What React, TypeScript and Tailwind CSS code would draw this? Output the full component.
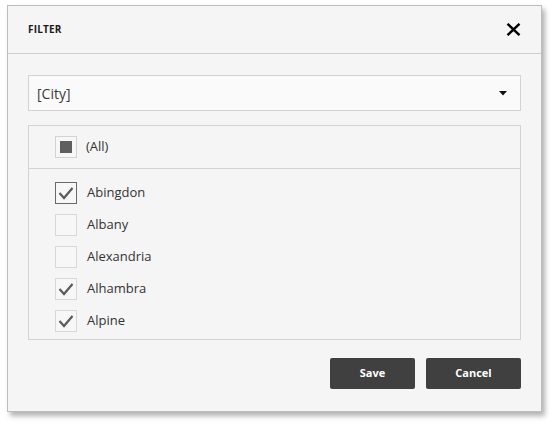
import { useState } from 'react'

const cities = [
    { name: 'Abingdon', checked: true, focused: true },
    { name: 'Albany', checked: false },
    { name: 'Alexandria', checked: false },
    { name: 'Alhambra', checked: true },
    { name: 'Alpine', checked: true },
]

const Check = () => (
    <svg width="16" height="14" viewBox="0 0 16 14" fill="none">
        <path d="M1.5 7 L6 12 L14.5 2" stroke="#5a5a5a" strokeWidth="2.2" />
    </svg>
)

const App = () => {
    const [items, setItems] = useState(cities)

    const toggle = (name: string) =>
        setItems((list) =>
            list.map((c) => (c.name === name ? { ...c, checked: !c.checked } : c)),
        )

    return (
        <div className="min-h-screen bg-white pt-[5px] pl-[7px] font-['Open_Sans',sans-serif] text-[#333]">
            <div className="flex h-[407px] w-[535px] flex-col border border-[#bdbdbd] bg-[#f5f5f5] shadow-[3px_4px_5px_rgba(0,0,0,0.3)]">
                <div className="flex h-[48px] shrink-0 items-center justify-between border-b border-[#cfcfcf] pl-[20px] pr-[20px]">
                    <span className="text-[10px] font-bold tracking-[0.2px] text-[#1a1a1a]">
                        FILTER
                    </span>
                    <svg width="15" height="13" viewBox="0 0 15 13">
                        <path
                            d="M1.5 0.8 L13.5 12.2 M13.5 0.8 L1.5 12.2"
                            stroke="#000"
                            strokeWidth="2.4"
                        />
                    </svg>
                </div>

                <div className="flex flex-col px-[20px] pt-[21px]">
                    <div className="flex h-[36px] items-center justify-between border border-[#d3d3d3] bg-[#fafafa] pl-[8px] pr-[13px]">
                        <span className="text-[14px] text-[#3a3a3a]">[City]</span>
                        <svg width="8" height="5" viewBox="0 0 8 5">
                            <path d="M0 0 H8 L4 4.5 Z" fill="#111" />
                        </svg>
                    </div>

                    <div className="mt-[14px] h-[215px] border border-[#d3d3d3] bg-[#f5f5f5]">
                        <div className="flex h-[43px] items-center border-b border-[#d3d3d3] pl-[26px]">
                            <span className="flex h-[22px] w-[22px] items-center justify-center border border-[#d3d3d3] bg-[#f7f7f7]">
                                <span className="h-[12px] w-[12px] bg-[#5f5f5f]" />
                            </span>
                            <span className="ml-[9px] text-[13px]">(All)</span>
                        </div>
                        <div className="flex flex-col pt-[8px]">
                            {items.map((c) => (
                                <div
                                    key={c.name}
                                    onClick={() => toggle(c.name)}
                                    className="flex h-[32px] cursor-pointer items-center pl-[26px]"
                                >
                                    <span
                                        className={
                                            c.focused
                                                ? 'flex h-[22px] w-[22px] items-center justify-center border border-[#6a6a6a] bg-[#f7f7f7]'
                                                : 'flex h-[22px] w-[22px] items-center justify-center border border-[#d8d8d8] bg-[#f7f7f7]'
                                        }
                                    >
                                        {c.checked && <Check />}
                                    </span>
                                    <span className="ml-[10px] text-[13px]">{c.name}</span>
                                </div>
                            ))}
                        </div>
                    </div>

                    <div className="mt-[18px] flex justify-end gap-[11px]">
                        <button className="h-[31px] w-[85px] rounded-[2px] bg-[#404040] text-[11px] font-bold text-white">
                            Save
                        </button>
                        <button className="h-[31px] w-[95px] rounded-[2px] bg-[#404040] text-[11px] font-bold text-white">
                            Cancel
                        </button>
                    </div>
                </div>
            </div>
        </div>
    )
}

export default App
